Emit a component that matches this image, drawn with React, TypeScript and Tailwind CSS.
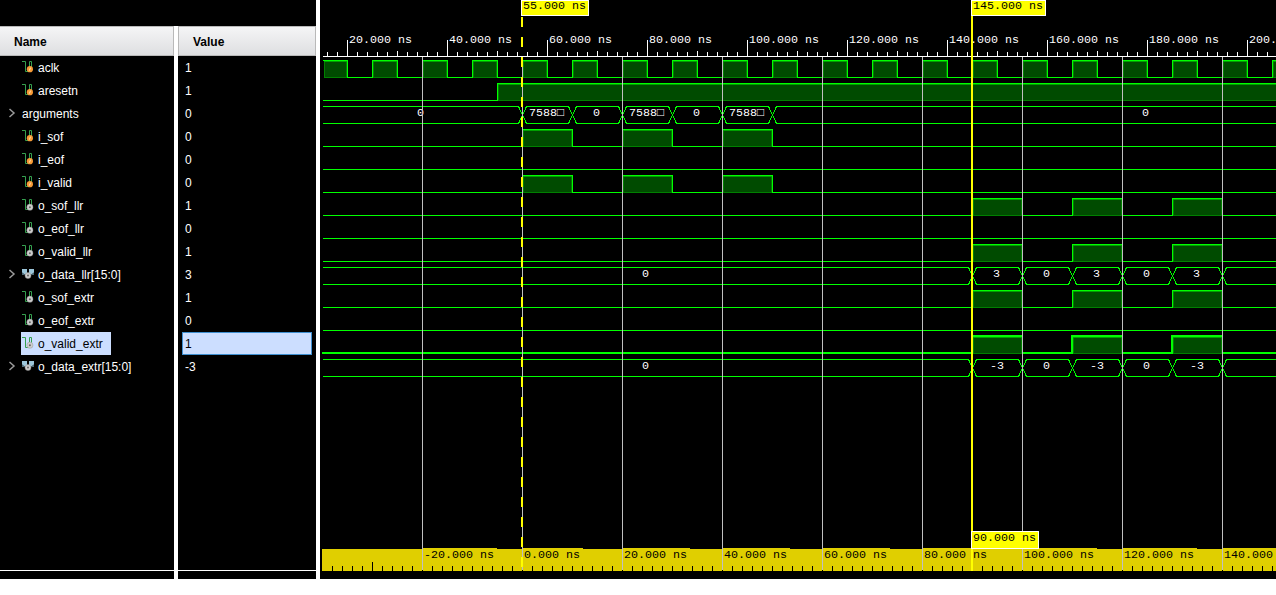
import React from "react";

type Kind = "group" | "in" | "out" | "bus";
type Signal = { name: string; value: string; kind: Kind; selected?: boolean };

const signals: Signal[] = [
  { name: "aclk", value: "1", kind: "in" },
  { name: "aresetn", value: "1", kind: "in" },
  { name: "arguments", value: "0", kind: "group" },
  { name: "i_sof", value: "0", kind: "in" },
  { name: "i_eof", value: "0", kind: "in" },
  { name: "i_valid", value: "0", kind: "in" },
  { name: "o_sof_llr", value: "1", kind: "out" },
  { name: "o_eof_llr", value: "0", kind: "out" },
  { name: "o_valid_llr", value: "1", kind: "out" },
  { name: "o_data_llr[15:0]", value: "3", kind: "bus" },
  { name: "o_sof_extr", value: "1", kind: "out" },
  { name: "o_eof_extr", value: "0", kind: "out" },
  { name: "o_valid_extr", value: "1", kind: "out", selected: true },
  { name: "o_data_extr[15:0]", value: "-3", kind: "bus" },
];

const LEFT = 323;
const RIGHT = 1276;
const range = (start: number, end: number, step: number) => {
  const out: number[] = [];
  for (let v = start; v < end; v += step) out.push(v);
  return out;
};

function SignalIcon({ kind }: { kind: Kind }) {
  if (kind === "bus") {
    return (
      <svg className="mb-px h-3 w-3 shrink-0" viewBox="0 0 12 12">
        <path d="M0 1h5v5.5H2.5L0 4.5zM7 1h5v3.5L9.5 6.5H7z" fill="#9cc6da" />
        <path d="M0 4.5V7h3zM12 4.5V7H9z" fill="#4d6b78" />
        <circle cx="6" cy="7.6" r="3" fill="#cdcdcd" stroke="#8a8a8a" strokeWidth=".5" />
        <circle cx="6" cy="7.6" r="1" fill="#666" />
      </svg>
    );
  }
  return (
    <svg className="mb-px h-3 w-3 shrink-0" viewBox="0 0 12 12">
      <path d="M0 .5h3.5v10H7.5V.5h2V6" fill="none" stroke="#35a04f" />
      {kind === "in" ? (
        <>
          <circle cx="7.9" cy="8.2" r="3.1" fill="#f79b36" />
          <path d="m7.4 9.6 1.1-2.9" stroke="#ffe2b8" strokeWidth="1" />
        </>
      ) : (
        <>
          <circle cx="7.9" cy="8.2" r="3.1" fill="#cdcdcd" stroke="#8a8a8a" strokeWidth=".4" />
          <circle cx="7.9" cy="8.2" r="1" fill="#666" />
        </>
      )}
    </svg>
  );
}

function NameRow({ s }: { s: Signal }) {
  const expandable = s.kind === "group" || s.kind === "bus";
  return (
    <div className="flex h-[23px] items-center">
      <div className="flex w-[21px] shrink-0 pl-2">
        {expandable && (
          <svg className="mb-px h-[10px] w-2" viewBox="0 0 8 10">
            <path d="m1.5 1 4.5 4-4.5 4" fill="none" stroke="#9a9a9a" strokeWidth="1.5" />
          </svg>
        )}
      </div>
      <div
        className={
          s.selected
            ? "flex h-[23px] w-[90px] items-center gap-1 bg-[#ccdeff] pl-px text-black"
            : "flex h-[23px] items-center gap-1 pl-px text-white"
        }
      >
        {s.kind !== "group" && <SignalIcon kind={s.kind} />}
        <span className="whitespace-nowrap">{s.name}</span>
      </div>
    </div>
  );
}

type Pulse = [number, number];

function Digital({ row, pulses, bold }: { row: number; pulses: Pulse[]; bold?: boolean }) {
  const top = 60 + 23 * row;
  const bot = top + 17;
  const w = bold ? 2 : 1;
  const o = w - 1;
  const start = LEFT - o;
  const lows: Pulse[] = [];
  let at = start;
  pulses.forEach(([a, b]) => {
    if (a > at) lows.push([at, a]);
    at = b;
  });
  if (at < RIGHT) lows.push([at, RIGHT]);
  return (
    <g>
      {lows.map(([a, b]) => (
        <rect key={a} x={a} y={bot - o} width={b - a + 1} height={w} fill="#00ff00" />
      ))}
      {pulses.map(([a, b]) => {
        const x = Math.max(a, LEFT);
        return (
          <g key={a}>
            <rect x={x + 1} y={top + 1} width={b - x - 1} height={17} fill="#008000" />
            <rect x={x + 2} y={top + 2} width={b - x - 3} height={15} fill="#004b00" />
            <rect x={x + 1} y={top + 1} width={b - x - 1} height={1} fill="#00a000" />
            <rect x={x} y={top - o} width={b - x + 1} height={w} fill="#00ff00" />
            {a >= LEFT && <rect x={a - o} y={top - o} width={w} height={18 + o} fill="#00ff00" />}
            <rect x={b} y={top} width={1} height={18} fill="#00ff00" />
          </g>
        );
      })}
    </g>
  );
}

type Label = [number, string];

function Bus({ row, edges, labels }: { row: number; edges: number[]; labels: Label[] }) {
  const top = 60 + 23 * row;
  const bounds = [LEFT - 4, ...edges, RIGHT + 4];
  return (
    <g>
      {bounds.slice(0, -1).map((a, i) => (
        <g key={a} fill="#00ff00">
          <rect x={a + 4} y={top} width={bounds[i + 1] - a - 7} height={1} />
          <rect x={a + 4} y={top + 17} width={bounds[i + 1] - a - 7} height={1} />
        </g>
      ))}
      {edges.map((x) => (
        <path
          key={x}
          d={`M${x - 3.5} ${top + 0.5}L${x + 4.5} ${top + 17.5}M${x + 4.5} ${top + 0.5}L${x - 3.5} ${top + 17.5}`}
          stroke="#00ff00"
          fill="none"
        />
      ))}
      {labels.map(([x, t]) => (
        <text key={x} x={x} y={top + 10} fill="#fff">
          {t}
        </text>
      ))}
    </g>
  );
}

function Flag({ x, y, w, h, label }: { x: number; y: number; w: number; h: number; label: string }) {
  return (
    <g>
      <rect x={x} y={y} width={w} height={h} fill="#fff" />
      <rect x={x + 1} y={y + 1} width={w - 2} height={h - 2} fill="#ffff00" />
      <text x={x + 2} y={y + (h === 16 ? 9 : 10)} fill="#000">
        {label}
      </text>
    </g>
  );
}

function Waveform() {
  const clock: Pulse[] = range(322, RIGHT, 50).map((x) => [x, x + 25]);
  const inputs: Pulse[] = [[522, 572], [622, 672], [722, 772]];
  const outputs: Pulse[] = [[972, 1022], [1072, 1122], [1172, 1222]];
  const outEdges = [972, 1022, 1072, 1122, 1172, 1222];
  return (
    <svg
      className="h-[579px] w-[956px] shrink-0 bg-black font-['Liberation_Mono',monospace] text-[11.67px] whitespace-pre"
      viewBox="320 0 956 579"
      shapeRendering="crispEdges"
    >
      {range(327, RIGHT, 10).map((x) => {
        const h = (x - 347) % 100 === 0 ? 16 : (x - 347) % 50 === 0 ? 5 : 4;
        return <rect key={x} x={x} y={56 - h} width={1} height={h} fill="#fff" />;
      })}
      <rect x={LEFT} y={56} width={953} height={1} fill="#fff" />
      {range(0, 10, 1).map((i) => (
        <text key={i} x={349 + 100 * i} y={43} fill="#fff">
          {`${20 + 20 * i}.000 ns`}
        </text>
      ))}

      <Digital row={0} pulses={clock} />
      <Digital row={1} pulses={[[497, 1277]]} />
      <Bus
        row={2}
        edges={[522, 572, 622, 672, 722, 772]}
        labels={[[417, "0"], [529, "7588□"], [593, "0"], [629, "7588□"], [693, "0"], [729, "7588□"], [1142, "0"]]}
      />
      <Digital row={3} pulses={inputs} />
      <Digital row={4} pulses={[]} />
      <Digital row={5} pulses={inputs} />
      <Digital row={6} pulses={outputs} />
      <Digital row={7} pulses={[]} />
      <Digital row={8} pulses={outputs} />
      <Bus
        row={9}
        edges={outEdges}
        labels={[[642, "0"], [993, "3"], [1043, "0"], [1093, "3"], [1143, "0"], [1193, "3"]]}
      />
      <Digital row={10} pulses={outputs} />
      <Digital row={11} pulses={[]} />
      <Digital row={12} pulses={outputs} bold />
      <Bus
        row={13}
        edges={outEdges}
        labels={[[642, "0"], [990, "-3"], [1043, "0"], [1090, "-3"], [1143, "0"], [1190, "-3"]]}
      />

      <rect x={322} y={549} width={954} height={22} fill="#e0cf00" />
      {range(332, RIGHT, 10).map((x) => (
        <rect key={x} x={x} y={x === 372 ? 562 : 566} width={1} height={x === 372 ? 9 : 5} fill="#000" />
      ))}
      {range(0, 9, 1).map((i) => {
        const t = `${i === 1 ? "0" : -20 + 20 * i}.000 ns`;
        return (
          <g key={i}>
            <rect x={422 + 100 * i} y={548} width={t.length * 7 + 5} height={2} fill="#e0cf00" />
            <text x={424 + 100 * i} y={558} fill="#000">
              {t}
            </text>
          </g>
        );
      })}
      {range(422, RIGHT, 100).map((x) => (
        <rect key={x} x={x} y={57} width={1} height={513} fill="#c0c0c0" />
      ))}

      {range(17, 570, 20).map((y) => (
        <rect key={y} x={521} y={y} width={2} height={10} fill="#ffff00" />
      ))}
      <rect x={971} y={16} width={2} height={555} fill="#ffff00" />
      <Flag x={521} y={0} w={68} h={16} label="55.000 ns" />
      <Flag x={971} y={0} w={75} h={16} label="145.000 ns" />
      <Flag x={971} y={531} w={68} h={18} label="90.000 ns" />
    </svg>
  );
}

const header =
  "flex h-[30px] items-center border-t border-r border-b border-[#b9b9b9] bg-linear-to-b from-[#f5f5f6] to-[#dedfe1] pt-px font-bold text-black";

export default function App() {
  return (
    <div className="flex h-[595px] w-[1276px] items-start overflow-hidden bg-white font-['Liberation_Sans',Arial,sans-serif] text-xs">
      <div className="h-[579px] w-[316px] shrink-0 bg-black pt-[26px]">
        <div className="flex h-[553px] gap-1 bg-white">
          <div className="flex w-[174px] flex-col bg-black">
            <div className={`${header} pl-[14px]`}>Name</div>
            <div className="grow">
              {signals.map((s) => (
                <NameRow key={s.name} s={s} />
              ))}
            </div>
            <div className="h-[9px] border-t border-white" />
          </div>
          <div className="flex w-[138px] flex-col bg-black">
            <div className={`${header} border-l pl-[14px]`}>Value</div>
            <div className="grow px-1">
              {signals.map((s) => (
                <div
                  key={s.name}
                  className={
                    s.selected
                      ? "flex h-[23px] items-center border border-[#3f8fd0] bg-[#ccdeff] pl-[2px] text-black"
                      : "flex h-[23px] items-center pl-[3px] text-white"
                  }
                >
                  {s.value}
                </div>
              ))}
            </div>
            <div className="h-[9px] border-t border-white" />
          </div>
        </div>
      </div>
      <div className="h-[579px] w-1 shrink-0 bg-white" />
      <Waveform />
    </div>
  );
}
